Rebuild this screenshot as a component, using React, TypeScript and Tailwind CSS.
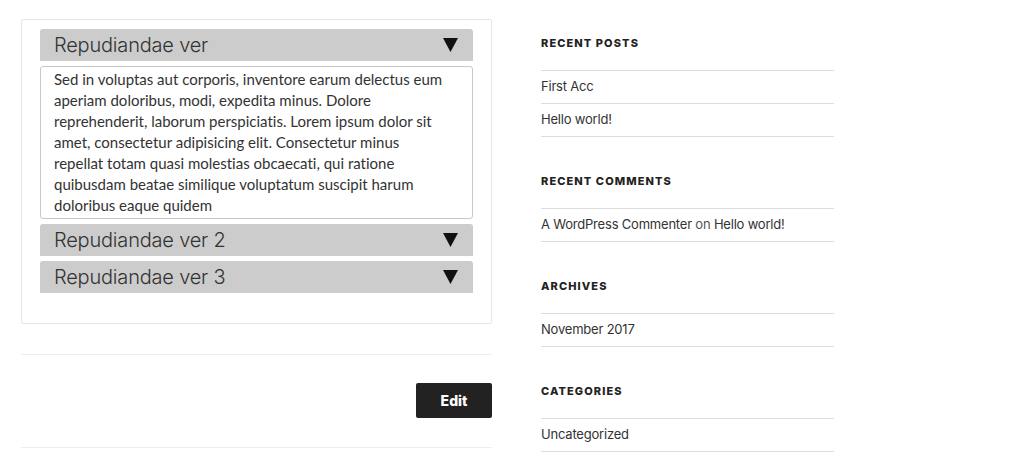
import React from "react";

const panels = [
  {
    title: "Repudiandae ver",
    open: true,
    lines: [
      "Sed in voluptas aut corporis, inventore earum delectus eum",
      "aperiam doloribus, modi, expedita minus. Dolore",
      "reprehenderit, laborum perspiciatis. Lorem ipsum dolor sit",
      "amet, consectetur adipisicing elit. Consectetur minus",
      "repellat totam quasi molestias obcaecati, qui ratione",
      "quibusdam beatae similique voluptatum suscipit harum",
      "doloribus eaque quidem",
    ],
  },
  { title: "Repudiandae ver 2", open: false, lines: [] },
  { title: "Repudiandae ver 3", open: false, lines: [] },
];

const widgets = [
  { title: "Recent Posts", items: [["First Acc"], ["Hello world!"]] },
  { title: "Recent Comments", items: [["A WordPress Commenter", " on ", "Hello world!"]] },
  { title: "Archives", items: [["November 2017"]] },
  { title: "Categories", items: [["Uncategorized"]] },
];

function Caret() {
  return (
    <svg width="15" height="14" viewBox="0 0 15 14" className="block">
      <polygon points="0,0 15,0 7.5,14" fill="#111" />
    </svg>
  );
}

function Accordion() {
  return (
    <div className="flex flex-col gap-[5px]">
      {panels.map((p) => (
        <div key={p.title} className="flex flex-col gap-[5px]">
          <div className="h-[32px] bg-[#cccccc] rounded-t-[3px] flex items-center justify-between pl-[14px] pr-[15px]">
            <span className="text-[20px] font-light text-[#333] tracking-[-0.2px] [font-family:Inter,sans-serif]">
              {p.title}
            </span>
            <Caret />
          </div>
          {p.open && (
            <div className="border border-[#c8c8c8] rounded-[3px] pl-[13px] pr-[10px] pt-[2px] pb-[2px]">
              <p className="text-[15px] leading-[21px] text-[#333] [font-family:Lato,sans-serif] [font-variant-ligatures:none]">
                {p.lines.map((l) => (
                  <span key={l} className="block whitespace-nowrap">
                    {l}
                  </span>
                ))}
              </p>
            </div>
          )}
        </div>
      ))}
    </div>
  );
}

export default function App() {
  return (
    <div className="w-[1024px] h-[475px] bg-white overflow-hidden [font-family:Inter,sans-serif]">
      <div className="flex pl-[21px] pt-[19px]">
        {/* Main column */}
        <div className="w-[471px]">
          <div className="border border-[#e6e6e6] rounded-[2px] pt-[9px] pb-[30px] px-[18px]">
            <Accordion />
          </div>
          <div className="mt-[30px] border-t border-[#eeeeee]" />
          <div className="flex justify-end pt-[28px] pb-[29px]">
            <button className="h-[35px] w-[76px] bg-[#222] text-white text-[14px] font-extrabold rounded-[2px]">
              Edit
            </button>
          </div>
          <div className="border-t border-[#eeeeee]" />
        </div>

        {/* Sidebar */}
        <aside className="ml-[49px] w-[293px] pt-[16px]">
          {widgets.map((w, i) => (
            <section key={w.title} className={i > 0 ? "mt-[36px]" : ""}>
              <h2 className="text-[11px] leading-[16px] font-extrabold uppercase tracking-[0.1em] text-[#222] mb-[19px]">
                {w.title}
              </h2>
              <ul className="border-t border-[#dddddd]">
                {w.items.map((parts, j) => (
                  <li
                    key={j}
                    className="h-[33px] pb-[1px] border-b border-[#dddddd] flex items-center text-[13px] text-[#333] tracking-[-0.2px]"
                  >
                    {parts.map((t, k) => (
                      <span key={k} className={k === 1 ? "text-[#555] whitespace-pre" : ""}>
                        {t}
                      </span>
                    ))}
                  </li>
                ))}
              </ul>
            </section>
          ))}
        </aside>
      </div>
    </div>
  );
}
